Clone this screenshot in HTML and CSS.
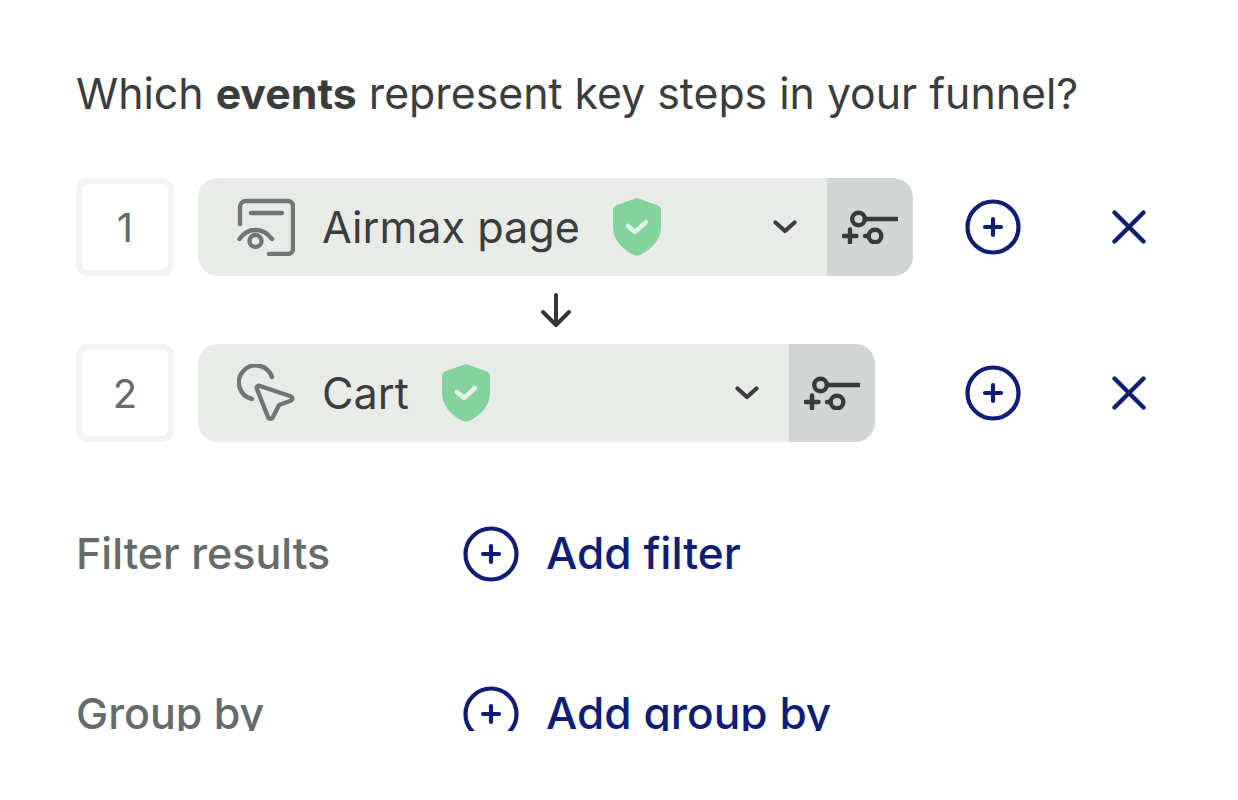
FILE: index.html
```html
<!DOCTYPE html>
<html lang="en">
<head>
<meta charset="utf-8">
<title>Funnel events</title>
<link rel="stylesheet" href="styles.css">
</head>
<body>
<main class="panel">
  <h1 class="question">Which <b>events</b> represent key steps in your funnel?</h1>

  <div class="step">
    <div class="num">1</div>
    <div class="pill pill-long">
      <svg class="ev-icon" viewBox="0 0 58 58" fill="none" stroke="#6f7774" stroke-width="4.400" stroke-linecap="round" stroke-linejoin="round">
        <path d="M3 26V9a6 6 0 0 1 6-6h42a5 5 0 0 1 5 5v43a5 5 0 0 1-5 5H32"/>
        <path d="M14 15h31"/>
        <path d="M2.500 41c4-6 10-9 16-9s12 3 16.500 9"/>
        <circle cx="18.500" cy="43" r="6"/>
      </svg>
      <span class="ev-name">Airmax page</span>
      <svg class="shield" viewBox="0 0 48 58"><path d="M24 0l20 7c2 .7 4 2 4 5v17c0 14-12 24-21 28-2 1-4 1-6 0C12 53 0 43 0 29V12c0-3 2-4.300 4-5z" fill="#85d39c"/><path d="M15 28l7 6 11-10" fill="none" stroke="#e4f3e8" stroke-width="4.500" stroke-linecap="round" stroke-linejoin="round"/></svg>
      <svg class="chev" viewBox="0 0 24 14" fill="none" stroke="#3a3d3c" stroke-width="4.200" stroke-linecap="round" stroke-linejoin="round"><path d="M2.500 2.500l9.500 8.500 9.500-8.500"/></svg>
      <div class="tune">
        <svg class="tune-icon" viewBox="0 0 56 34" fill="none" stroke="#383b3a" stroke-width="4.400" stroke-linecap="round"><circle cx="16.500" cy="9" r="6.300"/><path d="M23 9h32"/><circle cx="33" cy="26" r="6.300"/><path d="M26 26h-3"/><path d="M1.500 26h13M8 19.500v13"/></svg>
      </div>
    </div>
    <div class="actions">
      <svg class="plus" viewBox="0 0 56 56" fill="none" stroke="#111c75" stroke-width="4.200" stroke-linecap="round"><circle cx="28" cy="28" r="25.500"/><path d="M20 28h16M28 20v16"/></svg>
      <svg class="close" viewBox="0 0 34 34" fill="none" stroke="#111c75" stroke-width="4.400" stroke-linecap="round"><path d="M2.500 2.500l29 29M31.500 2.500l-29 29"/></svg>
    </div>
  </div>

  <div class="connector">
    <svg class="arrow" viewBox="0 0 32 36" fill="none" stroke="#333635" stroke-width="4" stroke-linecap="round" stroke-linejoin="round"><path d="M16 3v30M3 20l13 13 13-13"/></svg>
  </div>

  <div class="step">
    <div class="num">2</div>
    <div class="pill pill-short">
      <svg class="ev-icon" viewBox="0 0 58 58" fill="none" stroke="#6f7774" stroke-width="4.400" stroke-linecap="round" stroke-linejoin="round">
        <path d="M15 35A17 17 0 1 1 35 13"/>
        <path d="M23 22L53 32c3 1 3 4 0 5L42 41 36 53c-1 2.500-4 2.500-5 0L20 25c-1-2 1-4 3-3z"/>
      </svg>
      <span class="ev-name">Cart</span>
      <svg class="shield" viewBox="0 0 48 58"><path d="M24 0l20 7c2 .7 4 2 4 5v17c0 14-12 24-21 28-2 1-4 1-6 0C12 53 0 43 0 29V12c0-3 2-4.300 4-5z" fill="#85d39c"/><path d="M15 28l7 6 11-10" fill="none" stroke="#e4f3e8" stroke-width="4.500" stroke-linecap="round" stroke-linejoin="round"/></svg>
      <svg class="chev" viewBox="0 0 24 14" fill="none" stroke="#3a3d3c" stroke-width="4.200" stroke-linecap="round" stroke-linejoin="round"><path d="M2.500 2.500l9.500 8.500 9.500-8.500"/></svg>
      <div class="tune">
        <svg class="tune-icon" viewBox="0 0 56 34" fill="none" stroke="#383b3a" stroke-width="4.400" stroke-linecap="round"><circle cx="16.500" cy="9" r="6.300"/><path d="M23 9h32"/><circle cx="33" cy="26" r="6.300"/><path d="M26 26h-3"/><path d="M1.500 26h13M8 19.500v13"/></svg>
      </div>
    </div>
    <div class="actions">
      <svg class="plus" viewBox="0 0 56 56" fill="none" stroke="#111c75" stroke-width="4.200" stroke-linecap="round"><circle cx="28" cy="28" r="25.500"/><path d="M20 28h16M28 20v16"/></svg>
      <svg class="close" viewBox="0 0 34 34" fill="none" stroke="#111c75" stroke-width="4.400" stroke-linecap="round"><path d="M2.500 2.500l29 29M31.500 2.500l-29 29"/></svg>
    </div>
  </div>

  <div class="opt opt-filter">
    <span class="opt-label">Filter results</span>
    <a class="opt-add"><svg class="plus" viewBox="0 0 56 56" fill="none" stroke="#111c75" stroke-width="4.200" stroke-linecap="round"><circle cx="28" cy="28" r="25.500"/><path d="M20 28h16M28 20v16"/></svg><span class="opt-text">Add filter</span></a>
  </div>
  <div class="opt opt-group">
    <span class="opt-label">Group by</span>
    <a class="opt-add"><svg class="plus" viewBox="0 0 56 56" fill="none" stroke="#111c75" stroke-width="4.200" stroke-linecap="round"><circle cx="28" cy="28" r="25.500"/><path d="M20 28h16M28 20v16"/></svg><span class="opt-text">Add group by</span></a>
  </div>
</main>
</body>
</html>
```

FILE: styles.css
```css
* { box-sizing: border-box; }
html, body { margin: 0; background: #fff; }
body { font-family: Inter, "Noto Sans", sans-serif; }
.panel {
  height: 731px;
  overflow: hidden;
  padding: 64px 0 0 76px;
}
.question {
  margin: 0 0 54px;
  font-size: 42.800px;
  line-height: 60px;
  font-weight: 400;
  color: #3a3d3c;
  white-space: nowrap;
}
.question b { font-weight: 700; }
.step { display: flex; align-items: center; height: 98px; }
.num {
  width: 98px;
  height: 98px;
  flex: none;
  border: 6px solid #f1f3f2;
  border-radius: 12px;
  display: flex;
  align-items: center;
  justify-content: center;
  font-size: 40px;
  color: #646b68;
  margin-right: 24px;
}
.pill {
  height: 98px;
  flex: none;
  display: flex;
  align-items: center;
  background: #e9ebe9;
  border-radius: 20px;
  overflow: hidden;
  padding-left: 39px;
}
.pill-long { width: 715px; }
.pill-short { width: 677px; margin-right: 38px; }
.ev-icon { width: 58px; height: 58px; flex: none; margin-right: 27px; }
.ev-name { font-size: 43.200px; color: #3a3d3c; white-space: nowrap; }
.shield { width: 48px; height: 58px; flex: none; margin-left: 33px; }
.chev { width: 24px; height: 14px; flex: none; margin-left: auto; margin-right: 30px; }
.tune {
  width: 86px;
  height: 100%;
  flex: none;
  background: #d1d5d3;
  display: flex;
  align-items: center;
  justify-content: center;
}
.tune-icon { width: 56px; height: 34px; }
.actions { display: flex; align-items: center; margin-left: 52px; flex: none; }
.plus { width: 56px; height: 56px; flex: none; }
.close { width: 34px; height: 34px; margin-left: 91px; flex: none; }
.connector {
  width: 715px;
  height: 68px;
  margin-left: 122px;
  display: flex;
  align-items: center;
  justify-content: center;
}
.arrow { width: 32px; height: 36px; }
.opt { display: flex; align-items: center; height: 56px; }
.opt-filter { margin-top: 84px; }
.opt-group { margin-top: 104px; }
.opt-label { width: 387px; flex: none; font-size: 43px; font-weight: 500; color: #646b68; white-space: nowrap; padding-bottom: 3px; }
.opt-add { display: flex; align-items: center; font-size: 44.200px; font-weight: 500; color: #111c75; white-space: nowrap; }
.opt-add .plus { margin-right: 27px; }
.opt-text { padding-bottom: 2px; }
```
